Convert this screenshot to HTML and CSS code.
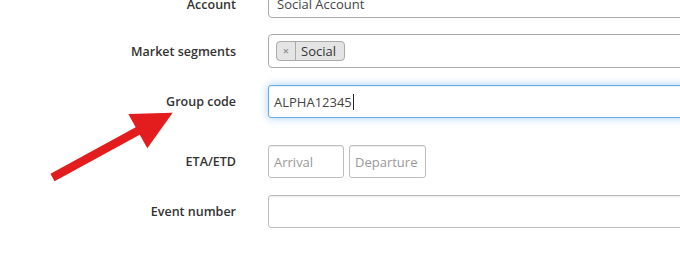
FILE: index.html
```html
<!DOCTYPE html>
<html>
<head>
<meta charset="utf-8">
<link rel="stylesheet" href="styles.css">
</head>
<body>
<form class="form">
  <div class="row row-account">
    <label class="label">Account</label>
    <div class="select-single"><span class="select-text">Social Account</span></div>
  </div>
  <div class="row row-market">
    <label class="label">Market segments</label>
    <div class="select-multi">
      <span class="choice"><span class="choice-remove">×</span><span class="choice-text">Social</span></span>
    </div>
  </div>
  <div class="row row-group">
    <label class="label">Group code</label>
    <div class="field field-focus"><span class="field-value">ALPHA12345</span><span class="caret"></span></div>
  </div>
  <div class="row row-eta">
    <label class="label">ETA/ETD</label>
    <div class="pair">
      <input class="field field-small" placeholder="Arrival">
      <input class="field field-small field-departure" placeholder="Departure">
    </div>
  </div>
  <div class="row row-event">
    <label class="label">Event number</label>
    <input class="field">
  </div>
</form>
<svg class="arrow" width="680" height="253" viewBox="0 0 680 253">
  <line x1="52.5" y1="177.5" x2="140" y2="129.7" stroke="#e31d1d" stroke-width="8.4"/>
  <polygon points="128.3,114 172.7,112.7 147.3,148.3" fill="#e31d1d"/>
</svg>
</body>
</html>
```
FILE: styles.css
```css
html, body {
  margin: 0;
  padding: 0;
  background: #fff;
  overflow: hidden;
}
body {
  width: 680px;
  height: 253px;
  position: relative;
  font-family: "Open Sans", "Noto Sans", sans-serif;
  font-size: 13px;
  color: #333;
}
.form {
  margin-top: -10px;
  width: 760px;
  display: flex;
  flex-direction: column;
}
.row {
  display: grid;
  grid-template-columns: 236px 460px;
  column-gap: 32px;
  align-items: center;
}
.row-market { margin-top: 16px; }
.row-group { margin-top: 17px; }
.row-eta { margin-top: 27px; }
.row-event { margin-top: 17px; }
.label {
  text-align: right;
  font-weight: 600;
  color: #333;
  font-size: 12.5px;
}
.select-single {
  box-sizing: border-box;
  height: 28px;
  border: 1px solid #aaa;
  border-radius: 4px;
  padding-left: 8px;
  line-height: 26px;
  color: #444;
}
.select-multi {
  box-sizing: border-box;
  height: 34px;
  border: 1px solid #aaa;
  border-radius: 4px;
  padding: 6px 0 0 7px;
}
.choice {
  display: inline-flex;
  box-sizing: border-box;
  height: 20px;
  background: #e4e4e4;
  border: 1px solid #aaa;
  border-radius: 4px;
  line-height: 18px;
  color: #333;
}
.choice-remove {
  width: 18px;
  text-align: center;
  color: #999;
  font-weight: bold;
  font-size: 11px;
  border-right: 1px solid #aaa;
}
.choice-text {
  padding: 0 8px 0 5px;
}
.field {
  box-sizing: border-box;
  height: 33px;
  border: 1px solid #bdbdbd;
  border-radius: 3px;
  padding: 0 5px;
  font-family: inherit;
  font-size: 13px;
  color: #444;
  box-shadow: inset 0 1px 1px rgba(0,0,0,0.075);
  outline: none;
  margin: 0;
  background: #fff;
}
.field::placeholder { color: #999; }
.field-focus {
  display: flex;
  align-items: center;
  border-color: #66afe9;
  box-shadow: inset 0 1px 1px rgba(0,0,0,0.075), 0 0 8px rgba(102,175,233,0.6);
}
.caret {
  display: inline-block;
  width: 1px;
  height: 16px;
  background: #222;
  margin-left: 1px;
}
.pair {
  display: flex;
  gap: 5px;
}
.field-small { width: 76px; }
.field-departure { width: 77px; }
.arrow {
  position: absolute;
  left: 0;
  top: 0;
  pointer-events: none;
}
```
